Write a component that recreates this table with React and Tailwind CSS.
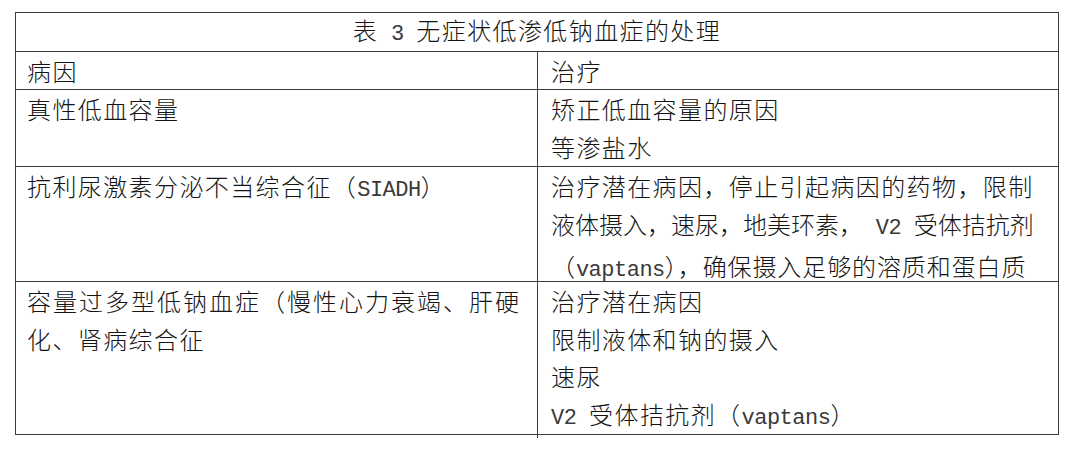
import React from 'react';

// Latin runs inside the Chinese text use a monospace face at half the CJK advance
function En({ children }) {
  return (
    <span className="font-['Liberation_Mono',monospace] text-[22px] tracking-[-0.5px] text-[#3a3a3a]">
      {children}
    </span>
  );
}

function Line({ children, className = '' }) {
  return <div className={`whitespace-nowrap ${className}`}>{children}</div>;
}

export default function App() {
  return (
    <div className="w-[1080px] h-[459px] bg-white pt-[12px] pl-[15px] text-[#151515] text-[24px] leading-[37.7px] tracking-[1.4px] font-['Noto_Sans_CJK_SC','Noto_Sans_CJK_TC',sans-serif] font-light">
      <div className="w-[1044px] border border-[#3c3c3c]">
        {/* title */}
        <div className="h-[39px] border-b border-[#3c3c3c] flex items-center justify-center">
          <span>
            表<En> 3 </En>无症状低渗低钠血症的处理
          </span>
        </div>

        {/* header */}
        <div className="grid grid-cols-[522px_1fr] h-[38px] border-b border-[#3c3c3c]">
          <div className="border-r border-[#3c3c3c] pl-[11px] flex items-center">病因</div>
          <div className="pl-[13px] flex items-center">治疗</div>
        </div>

        {/* row 1 */}
        <div className="grid grid-cols-[522px_1fr] h-[77px] border-b border-[#3c3c3c]">
          <div className="border-r border-[#3c3c3c] pl-[11px]">
            <Line>真性低血容量</Line>
          </div>
          <div className="pl-[13px]">
            <Line>矫正低血容量的原因</Line>
            <Line>等渗盐水</Line>
          </div>
        </div>

        {/* row 2 */}
        <div className="grid grid-cols-[522px_1fr] h-[115px] border-b border-[#3c3c3c]">
          <div className="border-r border-[#3c3c3c] pl-[11px]">
            <Line>
              抗利尿激素分泌不当综合征（<En>SIADH</En>）
            </Line>
          </div>
          <div className="pl-[13px]">
            <Line>治疗潜在病因，停止引起病因的药物，限制</Line>
            <Line className="tracking-[0px]">
              液体摄入，速尿，地美环素，<En> V2 </En>受体拮抗剂
            </Line>
            <Line className="tracking-[0.9px]">
              （<En>vaptans</En>），确保摄入足够的溶质和蛋白质
            </Line>
          </div>
        </div>

        {/* row 3 */}
        <div className="grid grid-cols-[522px_1fr] h-[152px]">
          <div className="border-r border-[#3c3c3c] pl-[11px]">
            <Line className="tracking-[2px]">容量过多型低钠血症（慢性心力衰竭、肝硬</Line>
            <Line>化、肾病综合征</Line>
          </div>
          <div className="pl-[13px]">
            <Line>治疗潜在病因</Line>
            <Line>限制液体和钠的摄入</Line>
            <Line>速尿</Line>
            <Line>
              <En>V2 </En>受体拮抗剂（<En>vaptans</En>）
            </Line>
          </div>
        </div>
      </div>
    </div>
  );
}
